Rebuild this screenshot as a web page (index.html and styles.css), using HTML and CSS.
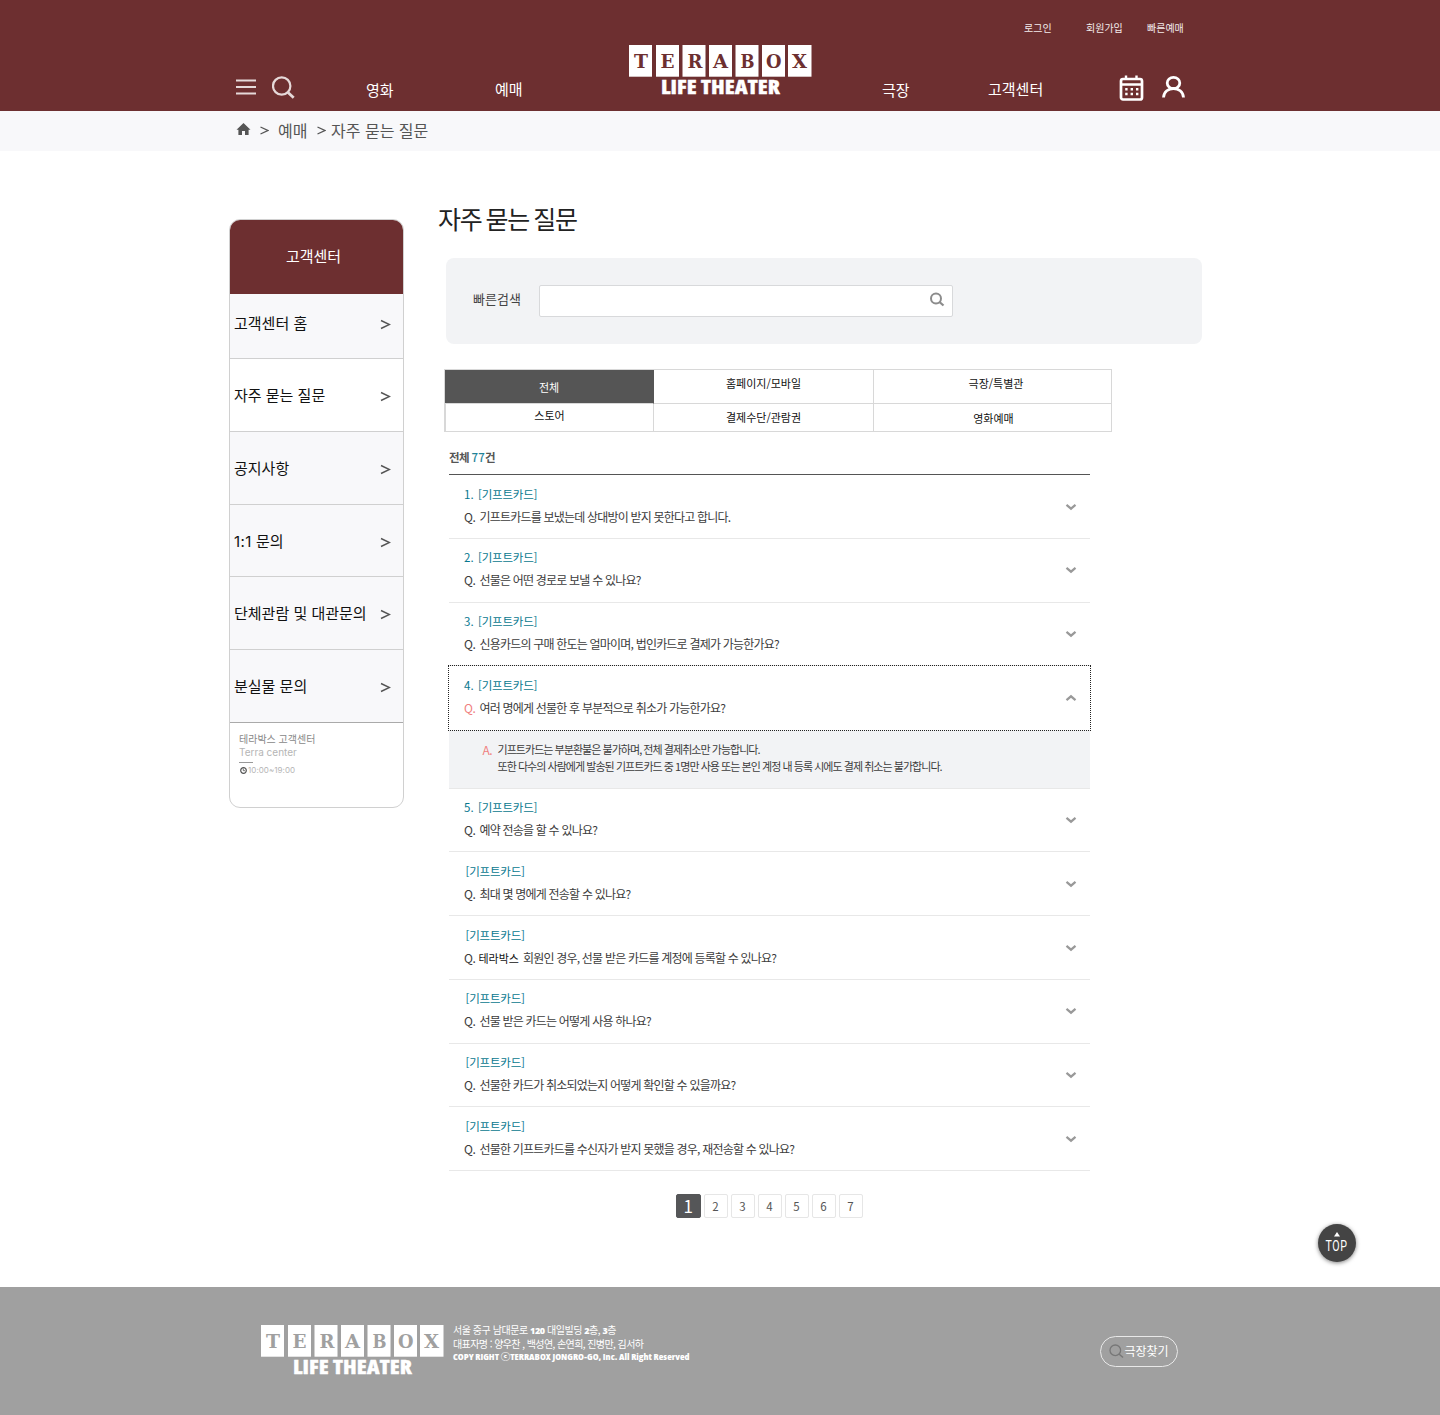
FILE: index.html
```html
<!DOCTYPE html>
<html lang="ko">
<head>
<meta charset="utf-8">
<title>TERABOX - 자주 묻는 질문</title>
<link rel="stylesheet" href="styles.css">
</head>
<body>
<svg class="defs" width="0" height="0">
  <symbol id="logo" viewBox="0 0 183 52" overflow="visible">
    <g class="logo-tiles"><rect x="0" y="0" width="23" height="31.700"/><rect x="27" y="0" width="23" height="31.700"/><rect x="53.500" y="0" width="23" height="31.700"/><rect x="80" y="0" width="23" height="31.700"/><rect x="106.500" y="0" width="23" height="31.700"/><rect x="133" y="0" width="23" height="31.700"/><rect x="159" y="0" width="23.500" height="31.700"/></g>
    <g class="logo-letters"><text x="5" y="22.500" textLength="14" lengthAdjust="spacingAndGlyphs">T</text><text x="31.500" y="22.500" textLength="14" lengthAdjust="spacingAndGlyphs">E</text><text x="58.500" y="22.500" textLength="15" lengthAdjust="spacingAndGlyphs">R</text><text x="84" y="22.500" textLength="15" lengthAdjust="spacingAndGlyphs">A</text><text x="111.500" y="22.500" textLength="14" lengthAdjust="spacingAndGlyphs">B</text><text x="137" y="22.500" textLength="15.500" lengthAdjust="spacingAndGlyphs">O</text><text x="163" y="22.500" textLength="15" lengthAdjust="spacingAndGlyphs">X</text></g>
    <text class="logo-sub" x="32" y="49.300" textLength="119" lengthAdjust="spacingAndGlyphs">LIFE THEATER</text>
  </symbol>
  <symbol id="down" viewBox="0 0 12 8"><path d="M1.500 1.800L6 5.700L10.500 1.800" fill="none" stroke="#999" stroke-width="2.200"/></symbol>
</svg>

<header class="header">
  <div class="util"><a class="u1">로그인</a><a class="u2">회원가입</a><a class="u3">빠른예매</a></div>
  <nav class="nav">
    <svg class="ic-menu" width="20" height="16" viewBox="0 0 20 16"><path d="M0 1.500H20M0 8H20M0 14.500H20" stroke="#e6d9d9" stroke-width="2.200"/></svg>
    <svg class="ic-search" width="24" height="24" viewBox="0 0 24 24"><circle cx="9.700" cy="10" r="8.700" fill="none" stroke="#e6d9d9" stroke-width="2.200"/><path d="M16 16.500L21.700 21.700" stroke="#e6d9d9" stroke-width="2.800"/></svg>
    <a class="n-low">영화</a>
    <a class="n-high">예매</a>
    <svg class="logo logo-head" width="183" height="52"><use href="#logo"/></svg>
    <a class="n-low">극장</a>
    <a class="n-high">고객센터</a>
    <svg class="ic-cal" width="25" height="26" viewBox="0 0 25 26"><rect x="2" y="4" width="21" height="20.500" rx="2" fill="none" stroke="#fff" stroke-width="2.700"/><path d="M2 9.500H23M7 0.500V5M17.500 0.500V5" stroke="#fff" stroke-width="2.400"/><path d="M6.200 14.200H19.500M6.200 19H19.500" stroke="#fff" stroke-width="2.400" stroke-dasharray="2.400 3"/></svg>
    <svg class="ic-user" width="23" height="24" viewBox="0 0 23 24"><ellipse cx="11.500" cy="7" rx="6.300" ry="5.600" fill="none" stroke="#fff" stroke-width="2.800"/><path d="M1.500 21.500C2 9.500 21 9.500 21.500 21.500" fill="none" stroke="#fff" stroke-width="2.800"/></svg>
  </nav>
</header>

<div class="crumbs">
  <svg width="15" height="12" viewBox="0 0 15 12"><path d="M7.500 0L14.500 6.700H12.600V12H9V8H6V12H2.400V6.700H.5Z" fill="#555"/></svg>
  <svg class="gt g1" width="9" height="9" viewBox="0 0 9 9"><path d="M.5 1L7.800 4.500L.5 8"/></svg>
  <span class="c1">예매</span>
  <svg class="gt g2" width="9" height="9" viewBox="0 0 9 9"><path d="M.5 1L7.800 4.500L.5 8"/></svg>
  <span class="c2">자주 묻는 질문</span>
</div>

<div class="page">
  <aside class="side">
    <h2>고객센터</h2>
    <a class="first">고객센터 홈<svg class="arr" width="11" height="11" viewBox="0 0 11 11"><path d="M1 1.500L9.500 5.500L1 9.500"/></svg></a>
    <a class="on">자주 묻는 질문<svg class="arr" width="11" height="11" viewBox="0 0 11 11"><path d="M1 1.500L9.500 5.500L1 9.500"/></svg></a>
    <a>공지사항<svg class="arr" width="11" height="11" viewBox="0 0 11 11"><path d="M1 1.500L9.500 5.500L1 9.500"/></svg></a>
    <a class="inquiry"><span><span class="num">1:1</span> 문의</span><svg class="arr" width="11" height="11" viewBox="0 0 11 11"><path d="M1 1.500L9.500 5.500L1 9.500"/></svg></a>
    <a class="late">단체관람 및 대관문의<svg class="arr" width="11" height="11" viewBox="0 0 11 11"><path d="M1 1.500L9.500 5.500L1 9.500"/></svg></a>
    <a class="late last">분실물 문의<svg class="arr" width="11" height="11" viewBox="0 0 11 11"><path d="M1 1.500L9.500 5.500L1 9.500"/></svg></a>
    <div class="center">
      <p class="ko">테라박스 고객센터</p>
      <p class="en">Terra center</p>
      <i></i>
      <p class="time"><svg width="7" height="7" viewBox="0 0 7 7"><circle cx="3.500" cy="3.500" r="2.800" fill="none" stroke="#555" stroke-width="1.200"/><path d="M3.300 1.500V3.700H5" fill="none" stroke="#555" stroke-width=".8"/></svg>10:00~19:00</p>
    </div>
  </aside>

  <main class="main">
    <h1>자주 묻는 질문</h1>
    <div class="quick">
      <label>빠른검색</label>
      <div class="field"><svg width="16" height="16" viewBox="0 0 16 16"><circle cx="7" cy="6.500" r="5" fill="none" stroke="#8c8c8c" stroke-width="2"/><path d="M10.500 10L14.500 13.500" stroke="#8c8c8c" stroke-width="2.300"/></svg></div>
    </div>

    <div class="tabs">
      <a class="active">전체</a><a class="t2">홈페이지/모바일</a><a class="t3">극장/특별관</a>
      <a class="t4">스토어</a><a class="t5">결제수단/관람권</a><a class="t6">영화예매</a>
    </div>

    <p class="total">전체 <b>77</b>건</p>
    <ul class="faq">
      <li><p class="cat"><span>1.</span>[기프트카드]</p><p class="q"><span>Q.</span>기프트카드를 보냈는데 상대방이 받지 못한다고 합니다.</p><svg class="chev"><use href="#down"/></svg></li>
      <li><p class="cat"><span>2.</span>[기프트카드]</p><p class="q"><span>Q.</span>선물은 어떤 경로로 보낼 수 있나요?</p><svg class="chev"><use href="#down"/></svg></li>
      <li><p class="cat"><span>3.</span>[기프트카드]</p><p class="q"><span>Q.</span>신용카드의 구매 한도는 얼마이며, 법인카드로 결제가 가능한가요?</p><svg class="chev"><use href="#down"/></svg></li>
      <li class="open"><p class="cat"><span>4.</span>[기프트카드]</p><p class="q"><span>Q.</span>여러 명에게 선물한 후 부분적으로 취소가 가능한가요?</p><svg class="chev"><use href="#down"/></svg></li>
      <li class="answer"><span>A.</span><div><p class="a1">기프트카드는 부분환불은 불가하며, 전체 결제취소만 가능합니다.</p><p>또한 다수의 사람에게 발송된 기프트카드 중 1명만 사용 또는 본인 계정 내 등록 시에도 결제 취소는 불가합니다.</p></div></li>
      <li><p class="cat"><span>5.</span>[기프트카드]</p><p class="q"><span>Q.</span>예약 전송을 할 수 있나요?</p><svg class="chev"><use href="#down"/></svg></li>
      <li><p class="cat nonum">[기프트카드]</p><p class="q"><span>Q.</span>최대 몇 명에게 전송할 수 있나요?</p><svg class="chev"><use href="#down"/></svg></li>
      <li><p class="cat nonum">[기프트카드]</p><p class="q"><span>Q.</span><em>테라박스</em>회원인 경우, 선물 받은 카드를 계정에 등록할 수 있나요?</p><svg class="chev"><use href="#down"/></svg></li>
      <li><p class="cat nonum">[기프트카드]</p><p class="q"><span>Q.</span>선물 받은 카드는 어떻게 사용 하나요?</p><svg class="chev"><use href="#down"/></svg></li>
      <li><p class="cat nonum">[기프트카드]</p><p class="q"><span>Q.</span>선물한 카드가 취소되었는지 어떻게 확인할 수 있을까요?</p><svg class="chev"><use href="#down"/></svg></li>
      <li><p class="cat nonum">[기프트카드]</p><p class="q"><span>Q.</span>선물한 기프트카드를 수신자가 받지 못했을 경우, 재전송할 수 있나요?</p><svg class="chev"><use href="#down"/></svg></li>
    </ul>
    <div class="pager"><a class="cur">1</a><a>2</a><a>3</a><a>4</a><a>5</a><a>6</a><a>7</a></div>
  </main>
</div>

<footer class="footer">
  <svg class="logo logo-foot" width="183" height="52"><use href="#logo"/></svg>
  <div class="info">
    <p class="f1">서울 중구 남대문로 <b>120</b> 대일빌딩 <b>2</b>층, <b>3</b>층</p>
    <p class="f2">대표자명 : 양우찬 , 백성연, 손연희, 진병만, 김서하</p>
    <p class="f3">COPY RIGHT ⓒTERRABOX JONGRO-GO, Inc. All Right Reserved</p>
  </div>
  <a class="find"><svg width="15" height="15" viewBox="0 0 15 15"><circle cx="6.300" cy="6.300" r="5.300" fill="none" stroke="#777" stroke-width="1.300"/><path d="M10 10L14 13.500" stroke="#777" stroke-width="1.500"/></svg>극장찾기</a>
</footer>

<a class="top"><svg width="6" height="5" viewBox="0 0 6 5"><path d="M3 0L6 4.500H0Z" fill="#fff"/></svg><span>TOP</span></a>
</body>
</html>
```
FILE: styles.css
```css
* { box-sizing: border-box; }
body {
  margin: 0;
  position: relative;
  width: 1440px;
  height: 1415px;
  background: #fff;
  color: #111;
  font-family: "Noto Sans CJK KR", sans-serif;
  font-size: 15px;
  line-height: 20px;
}
p, h1, h2, ul { margin: 0; padding: 0; font-weight: 400; }
ul { list-style: none; }
svg { display: block; flex: none; }
.defs { position: absolute; overflow: visible; }

/* header */
.header { height: 111px; background: #6d2f30; color: #fff; }
.util { height: 45px; padding: 18px 0 0 1024px; display: flex; font-size: 10px; line-height: 19px; color: #f3ecec; }
.util a { white-space: nowrap; }
.u1 { width: 62px; }
.u2 { width: 61px; }
.nav {
  height: 66px;
  padding-left: 236px;
  display: grid;
  grid-template-columns: 36px 94px 129px 134px 253px 106px 131px 43px 30px;
  align-items: start;
}
.ic-menu { margin-top: 34px; }
.ic-search { margin-top: 31px; }
.ic-cal { margin-top: 30px; }
.ic-user { margin-top: 31px; }
.n-low { margin-top: 35px; }
.n-high { margin-top: 34px; }

.logo { color: #6d2f30; overflow: visible; }
.logo-tiles, .logo-sub { fill: #fff; }
.logo-letters { fill: currentColor; font: 700 18px "DejaVu Serif", serif; }
.logo-sub { font: 800 20px "Open Sans", sans-serif; font-stretch: 75%; stroke: #fff; stroke-width: .3px; }

/* breadcrumb */
.crumbs {
  height: 40px;
  padding: 0 0 2px 236px;
  display: flex;
  align-items: center;
  background: #f8f8fa;
  color: #555;
  font-size: 16px;
}
.crumbs > svg:first-child { margin-top: -2px; }
.gt { margin-top: 1px; }
.gt path { fill: none; stroke: #555; stroke-width: 1.3px; }
.g1 { margin-left: 9px; }
.c1 { margin-left: 9px; width: 39px; }
.c2 { margin-left: 5px; }

.page { display: flex; height: 1136px; padding-left: 229px; }

/* side menu */
.side {
  width: 175px;
  height: 589px;
  margin-top: 68px;
  border: 1px solid #d0d0d0;
  border-radius: 11px;
  overflow: hidden;
  flex: none;
}
.side h2 { height: 74px; padding-right: 6px; background: #6d2f30; color: #fff; font-size: 15px; line-height: 72px; text-align: center; }
.side a {
  display: flex;
  align-items: center;
  justify-content: space-between;
  height: 72.800px;
  padding: 1px 12px 0 4px;
  border-bottom: 1px solid #d0d0d0;
  background: #f8f8fa;
  color: #111;
}
.side a.first { height: 65px; padding: 0 12px 6px 4px; }
.side a.inquiry { padding-top: 2px; }
.side a.late { padding: 1px 12px 1px 4px; }
.side a.on { background: #fff; }
.side a.last { border-color: #aaa; }
.num { font-family: Inter, sans-serif; letter-spacing: .4px; }
.arr { margin-top: 2px; }
.arr path { fill: none; stroke: #555; stroke-width: 1.400px; }
.center { padding: 10px 9px; color: #888; }
.center .ko { font-size: 10px; line-height: 12px; }
.center .en { font: 10px/14px Inter, sans-serif; color: #b5b5b5; }
.center i { display: block; width: 14px; height: 1px; margin-top: 3px; background: #999; }
.time { display: flex; align-items: center; gap: 1px; margin-top: 2.500px; padding-left: 1px; font: 8px/10px Inter, sans-serif; letter-spacing: .05px; color: #b5b5b5; }

/* content */
.main { width: 773px; margin-left: 34px; padding-top: 50px; }
h1 { height: 57px; font-size: 25px; line-height: 34px; letter-spacing: -1.300px; word-spacing: -1.500px; color: #222; }
.quick {
  display: flex;
  align-items: center;
  width: 756px;
  height: 86px;
  margin-left: 8px;
  padding-left: 27px;
  background: #f2f3f5;
  border-radius: 8px;
}
.quick label { width: 66px; margin-top: -4px; font-size: 13px; color: #444; }
.field { display: flex; justify-content: flex-end; width: 414px; height: 32px; padding: 6px 7px; border: 1px solid #d8d9db; border-radius: 2px; background: #fff; }

.tabs {
  display: grid;
  grid-template-columns: 209px 220px 238px;
  grid-template-rows: 34px 28px;
  width: 668px;
  height: 63px;
  margin: 25px 0 0 6px;
  border: 1px solid #d8d8d8;
  border-width: 1px 0 0 1px;
  font-size: 11px;
  text-align: center;
}
.tabs a { border: 1px solid #d8d8d8; border-width: 0 1px 1px 0; padding-top: 3px; }
.tabs .active { background: #555; color: #fff; border-right-color: #555; padding-top: 7px; }
.tabs .t3 { padding-left: 7px; }
.tabs .t4 { padding-top: 1px; border-left-width: 1px; }
.tabs .t6 { padding: 4px 0 0 2px; }

.total { margin: 15px 0 0 11px; height: 27px; font-size: 11.500px; font-weight: 700; letter-spacing: -.6px; color: #555; }
.total b { font-weight: 500; color: #1f8398; letter-spacing: .2px; }

.faq { width: 641px; margin-left: 11px; border-top: 1px solid #555; font-size: 12px; color: #3c3c3c; }
.faq li { position: relative; height: 63.780px; padding: 7.500px 0 0 15px; border-bottom: 1px solid #e8e8e8; line-height: 22px; white-space: nowrap; }
.cat { display: flex; font-size: 11.500px; color: #08788f; letter-spacing: -.2px; }
.cat span { width: 14px; letter-spacing: 0; }
.cat.nonum { padding-left: 1.500px; }
.q { display: flex; margin-top: 1px; letter-spacing: -.8px; }
.q span { width: 15.500px; letter-spacing: -.5px; }
.q em { width: 44.500px; margin-left: -1px; font-size: 11px; font-style: normal; color: #111; letter-spacing: 0; }
.chev { position: absolute; right: 13.500px; top: 27.500px; width: 12px; height: 8px; }
.faq .open { z-index: 1; outline: 1px dotted #222; outline-offset: 0; border-color: transparent; }
.open .chev { transform: rotate(180deg); }
.open .q span, .answer span { color: #f07f7f; }
.faq .answer { display: flex; height: 58.500px; padding: 10.500px 0 0 33.500px; background: #f2f3f5; font-size: 11px; line-height: 17.500px; letter-spacing: -.96px; }
.answer span { width: 15px; font-size: 12px; letter-spacing: -.5px; }

.pager { display: flex; gap: 3px; margin: 23px 0 0 238px; }
.pager a { width: 24px; height: 24px; border: 1px solid #e6e6e6; border-radius: 2px; font-size: 11.500px; line-height: 22px; text-align: center; color: #555; }
.pager .cur { background: #555658; border-color: #555658; color: #fff; font-size: 17px; width: 24.500px; }

/* footer */
.footer { display: flex; height: 128px; padding-left: 261px; background: #a0a0a0; color: #fff; }
.logo-foot { margin-top: 38px; color: #a0a0a0; }
.info { width: 656px; margin: 36px 0 0 9px; font-size: 10px; line-height: 13px; white-space: nowrap; }
.info b { font-family: "Open Sans", sans-serif; font-weight: 800; font-size: 9px; }
.f1 { letter-spacing: -.45px; }
.f2 { letter-spacing: -.58px; }
.f3 { font-family: "Open Sans", "Noto Sans CJK KR", sans-serif; font-weight: 800; font-size: 9.500px; font-stretch: 75%; }
.find { display: flex; align-items: center; justify-content: center; width: 78px; height: 31px; margin: 49px 0 0 -9px; padding-bottom: 1px; border: 1px solid #e8e8e8; border-radius: 16px; font-size: 12px; }

.top {
  position: absolute;
  left: 1318px;
  top: 1224px;
  display: flex;
  flex-direction: column;
  align-items: center;
  width: 38px;
  height: 38px;
  padding-top: 8px;
  border-radius: 50%;
  background: #444;
  color: #fff;
  box-shadow: 0 1px 4px rgba(0, 0, 0, .5);
}
.top span { margin-top: 1.500px; font: 400 14px/15px Roboto, sans-serif; transform: scaleX(.76); letter-spacing: .8px; }
```
